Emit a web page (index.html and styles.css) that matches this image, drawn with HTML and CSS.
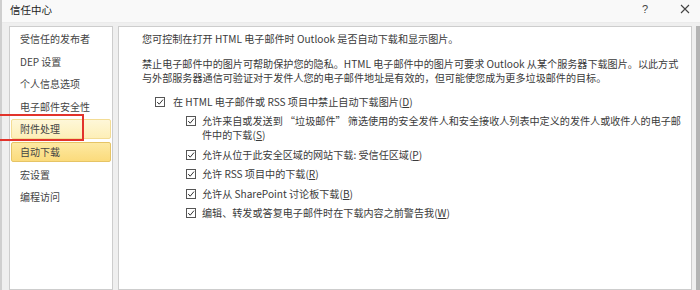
FILE: index.html
```html
<!DOCTYPE html>
<html lang="zh-CN">
<head>
<meta charset="utf-8">
<title>信任中心</title>
<link rel="stylesheet" href="styles.css">
</head>
<body>
<div class="window">
  <div class="titlebar">
    <span class="title">信任中心</span>
    <span class="help">?</span>
    <span class="close"><svg width="10" height="10" viewBox="0 0 10 10"><path d="M1 1 L9 9 M9 1 L1 9" stroke="#444" stroke-width="1.1" fill="none"/></svg></span>
  </div>
  <div class="content">
    <div class="nav">
      <div class="item">受信任的发布者</div>
      <div class="item">DEP 设置</div>
      <div class="item">个人信息选项</div>
      <div class="item">电子邮件安全性</div>
      <div class="item hover">附件处理</div>
      <div class="item selected">自动下载</div>
      <div class="item">宏设置</div>
      <div class="item">编程访问</div>
    </div>
    <div class="main">
      <p class="para first">您可控制在打开 HTML 电子邮件时 Outlook 是否自动下载和显示图片。</p>
      <p class="para">禁止电子邮件中的图片可帮助保护您的隐私。HTML 电子邮件中的图片可要求 Outlook 从某个服务器下载图片。以此方式<br>与外部服务器通信可验证对于发件人您的电子邮件地址是有效的，但可能使您成为更多垃圾邮件的目标。</p>
      <div class="opt top">
        <span class="cb"><svg width="10" height="10" viewBox="0 0 10 10"><rect x="0.5" y="0.5" width="9" height="9" fill="#fff" stroke="#555"/><path d="M2.2 5 L4.2 7.2 L8 2.6" stroke="#333" stroke-width="1" fill="none"/></svg></span>
        <span class="lbl">在 HTML 电子邮件或 RSS 项目中禁止自动下载图片(<u>D</u>)</span>
      </div>
      <div class="sub">
        <div class="opt">
          <span class="cb"><svg width="10" height="10" viewBox="0 0 10 10"><rect x="0.5" y="0.5" width="9" height="9" fill="#fff" stroke="#555"/><path d="M2.2 5 L4.2 7.2 L8 2.6" stroke="#333" stroke-width="1" fill="none"/></svg></span>
          <span class="lbl">允许来自或发送到 “垃圾邮件” 筛选使用的安全发件人和安全接收人列表中定义的发件人或收件人的电子邮<br>件中的下载(<u>S</u>)</span>
        </div>
        <div class="opt">
          <span class="cb"><svg width="10" height="10" viewBox="0 0 10 10"><rect x="0.5" y="0.5" width="9" height="9" fill="#fff" stroke="#555"/><path d="M2.2 5 L4.2 7.2 L8 2.6" stroke="#333" stroke-width="1" fill="none"/></svg></span>
          <span class="lbl">允许从位于此安全区域的网站下载: 受信任区域(<u>P</u>)</span>
        </div>
        <div class="opt">
          <span class="cb"><svg width="10" height="10" viewBox="0 0 10 10"><rect x="0.5" y="0.5" width="9" height="9" fill="#fff" stroke="#555"/><path d="M2.2 5 L4.2 7.2 L8 2.6" stroke="#333" stroke-width="1" fill="none"/></svg></span>
          <span class="lbl">允许 RSS 项目中的下载(<u>R</u>)</span>
        </div>
        <div class="opt">
          <span class="cb"><svg width="10" height="10" viewBox="0 0 10 10"><rect x="0.5" y="0.5" width="9" height="9" fill="#fff" stroke="#555"/><path d="M2.2 5 L4.2 7.2 L8 2.6" stroke="#333" stroke-width="1" fill="none"/></svg></span>
          <span class="lbl">允许从 SharePoint 讨论板下载(<u>B</u>)</span>
        </div>
        <div class="opt">
          <span class="cb"><svg width="10" height="10" viewBox="0 0 10 10"><rect x="0.5" y="0.5" width="9" height="9" fill="#fff" stroke="#555"/><path d="M2.2 5 L4.2 7.2 L8 2.6" stroke="#333" stroke-width="1" fill="none"/></svg></span>
          <span class="lbl">编辑、转发或答复电子邮件时在下载内容之前警告我(<u>W</u>)</span>
        </div>
      </div>
    </div>
    <div class="edge"></div>
  </div>
  <div class="redmark"></div>
</div>
</body>
</html>
```

FILE: styles.css
```css
html, body {
  margin: 0;
  padding: 0;
}
body {
  width: 700px;
  height: 290px;
  overflow: hidden;
  background: #f0f0f0;
  font-family: "Noto Sans CJK SC", "Noto Sans", sans-serif;
  color: #3a3a3a;
}
.window {
  position: relative;
  width: 700px;
  height: 290px;
  display: flex;
  flex-direction: column;
  background: #efefef;
  border-left: 2px solid #cfcfcf;
  box-sizing: border-box;
}
.titlebar {
  height: 23px;
  flex: none;
  background: #f9f9f9;
  display: flex;
  align-items: center;
  padding-left: 8px;
  box-sizing: border-box;
  border-bottom: 1px solid #ebebeb;
}
.title {
  font-size: 10.5px;
  color: #222;
  flex: 1;
  margin-top: -3px;
}
.help {
  font-size: 11px;
  color: #444;
  width: 38px;
  margin-top: -4px;
  font-family: "Liberation Sans", sans-serif;
}
.close {
  width: 20px;
  display: flex;
  margin-top: -5px;
}
.content {
  flex: 1;
  display: flex;
  padding: 3px 0 0 7px;
  gap: 5px;
  min-height: 0;
}
.nav {
  width: 104px;
  flex: none;
  background: #fff;
  border: 1px solid #cdcdcd;
  box-sizing: border-box;
  padding: 2px 1px 0 1px;
  display: flex;
  flex-direction: column;
  gap: 2.6px;
}
.item {
  height: 20px;
  line-height: 18px;
  font-size: 10px;
  padding-left: 8px;
  border: 1px solid transparent;
  border-radius: 2px;
  color: #444;
  box-sizing: border-box;
  white-space: nowrap;
}
.item.hover {
  background: linear-gradient(#fef7d8, #fdefb8);
  border-color: #f3dc94;
}
.item.selected {
  background: linear-gradient(#fde9a2, #fbdb7c);
  border-color: #e6c465;
}
.main {
  width: 574px;
  flex: none;
  background: #fff;
  border: 1px solid #cdcdcd;
  box-sizing: border-box;
  padding: 5px 0 0 23px;
  font-size: 10.1px;
  line-height: 14px;
}
.edge {
  flex: 1;
  margin-left: -1px;
  border-right: 4px solid #b4b4b4;
}
.para {
  margin: 0;
  white-space: nowrap;
}
.para.first {
  margin-bottom: 9px;
  margin-top: 0;
}
.para + .para {
  margin-top: 11px;
}
.para + .opt.top {
  margin-top: 10px;
}
.opt {
  display: flex;
  align-items: flex-start;
  white-space: nowrap;
}
.opt.top {
  margin-left: 13px;
}
.cb {
  width: 10px;
  height: 14px;
  display: flex;
  align-items: center;
  margin-right: 8px;
  flex: none;
}
.sub {
  margin-left: 44px;
  margin-top: 5px;
  display: flex;
  flex-direction: column;
  gap: 5.6px;
}
.sub .cb {
  margin-right: 6px;
}
.opt u {
  text-decoration: underline;
  text-underline-offset: 1px;
}
.redmark {
  position: absolute;
  left: -6px;
  top: 114px;
  width: 88px;
  height: 27px;
  border: 2px solid #e2332b;
  box-sizing: border-box;
}
```
